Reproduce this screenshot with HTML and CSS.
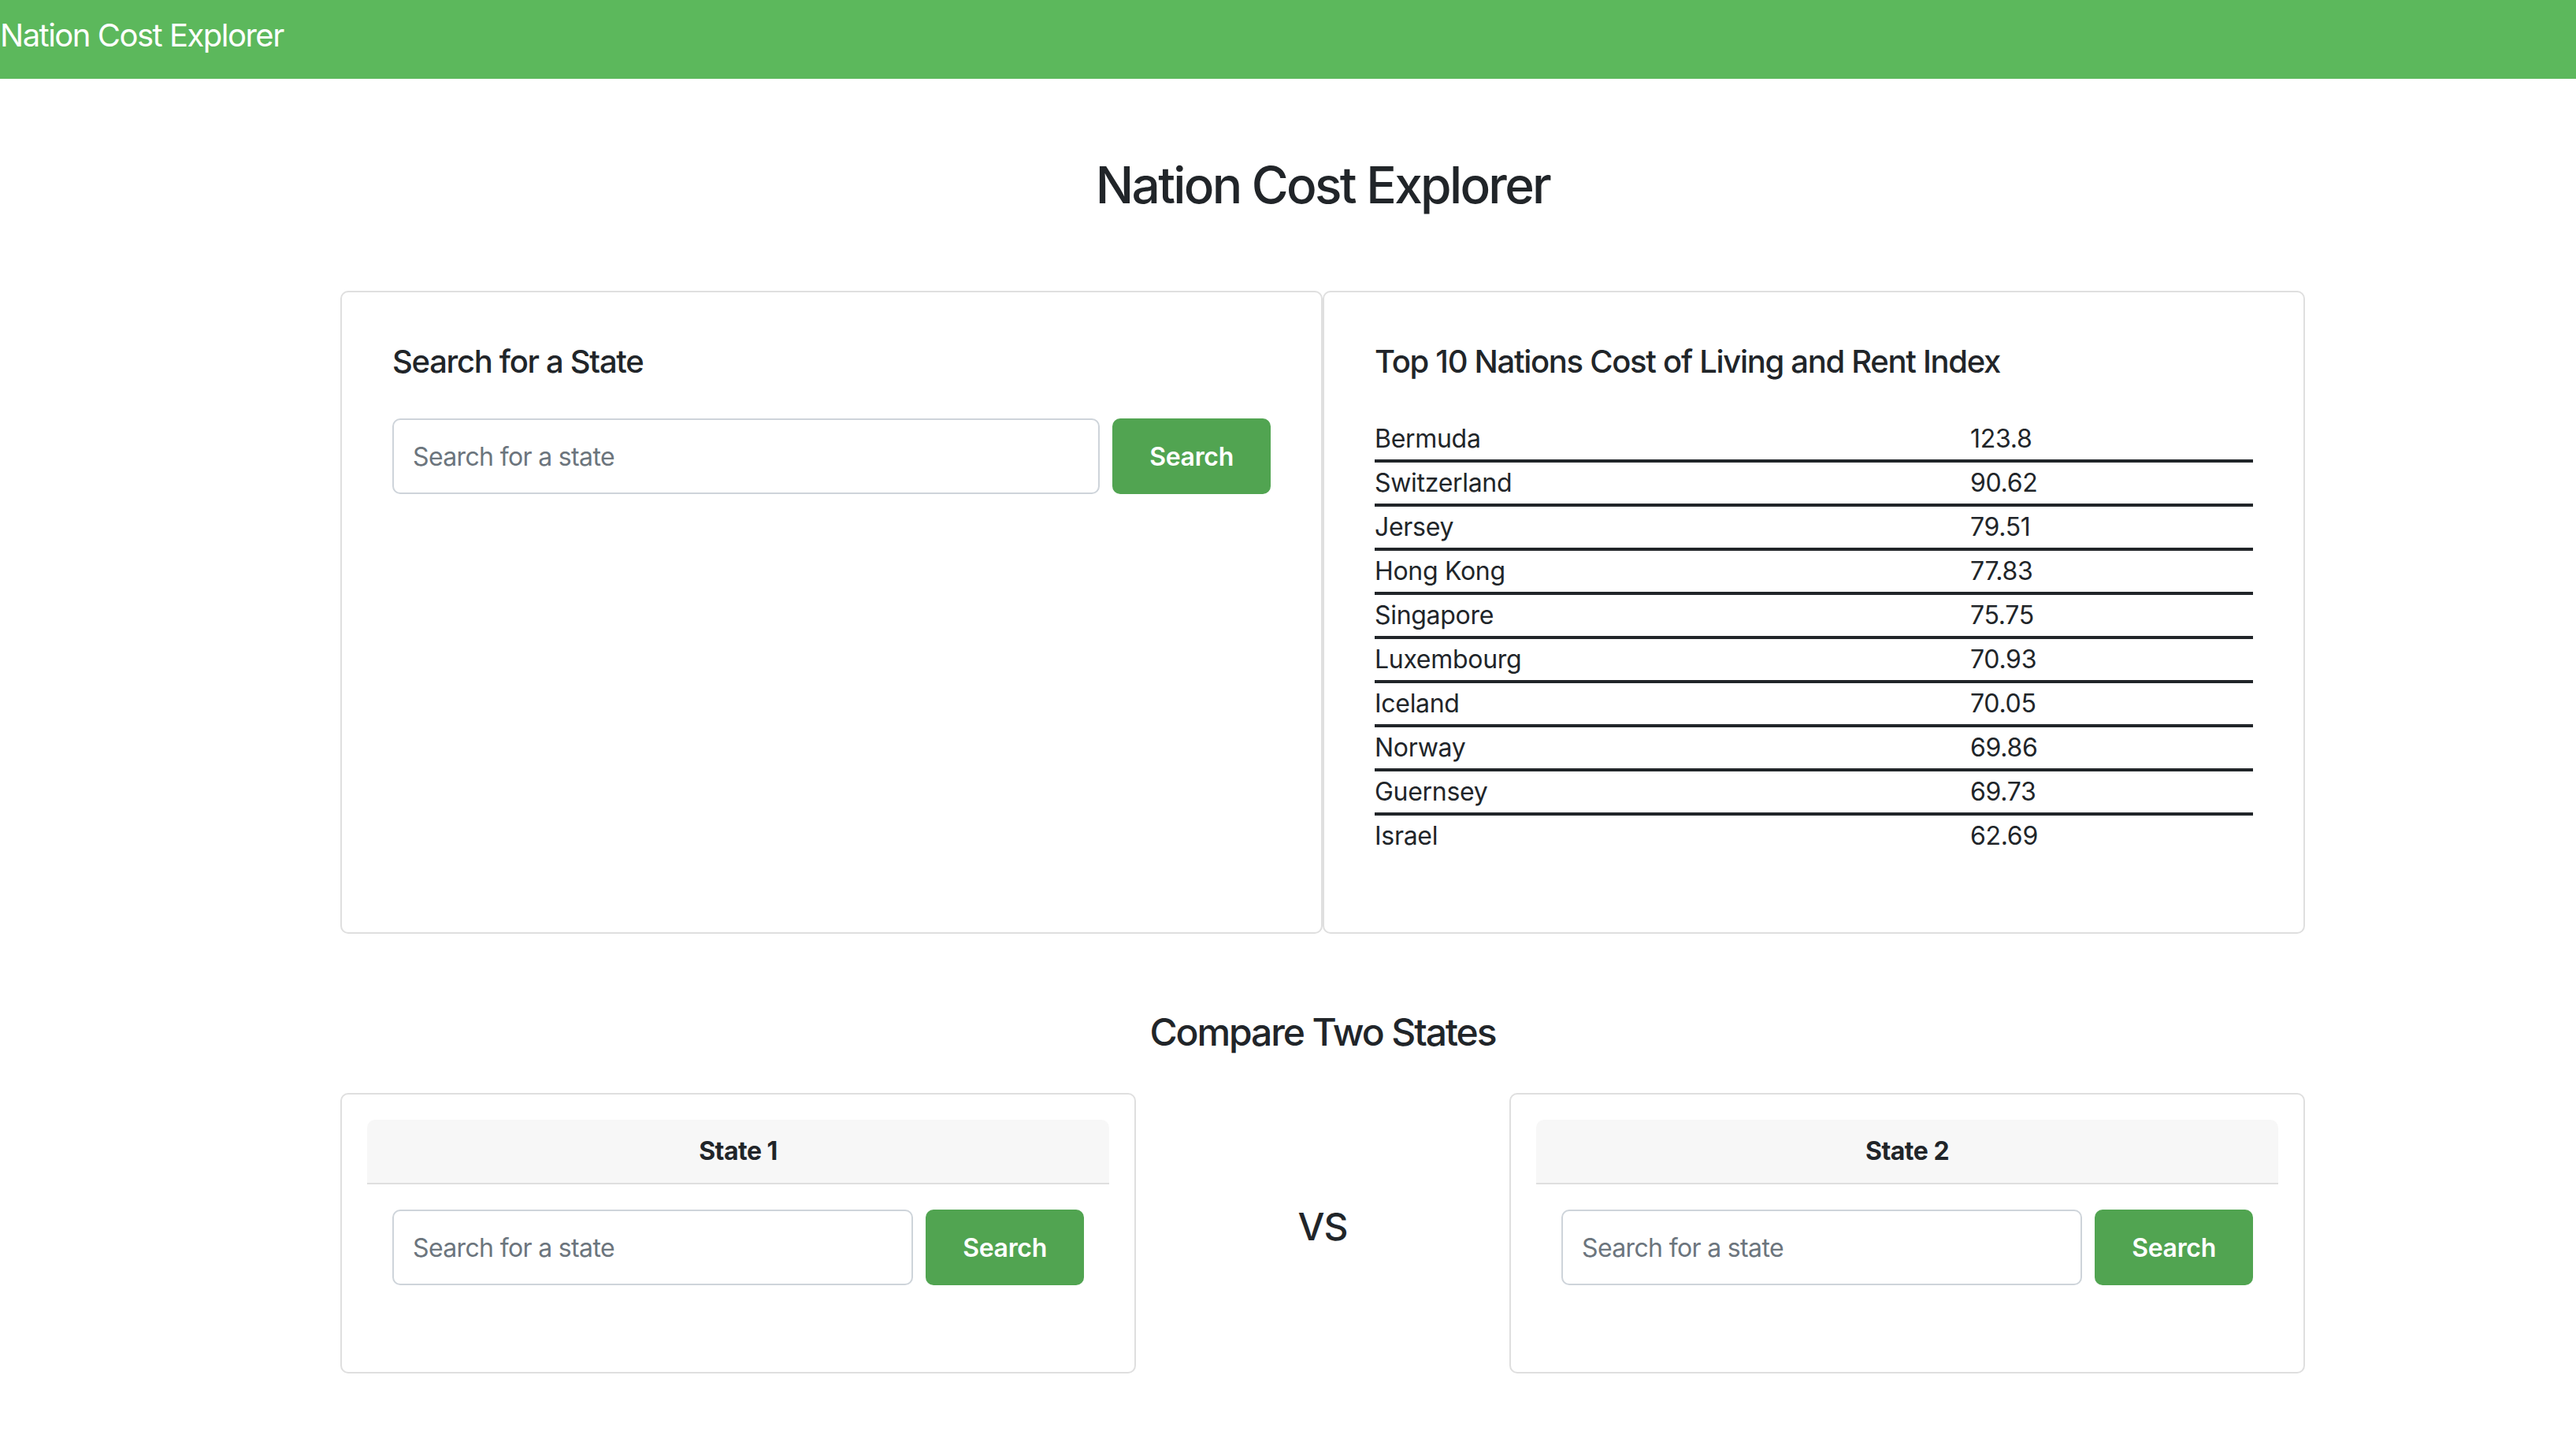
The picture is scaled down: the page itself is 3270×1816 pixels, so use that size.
FILE: index.html
```html
<!DOCTYPE html>
<html lang="en">
<head>
<meta charset="utf-8">
<title>Nation Cost Explorer</title>
<link rel="stylesheet" href="styles.css">
</head>
<body>
<nav class="navbar"><span class="brand">Nation Cost Explorer</span></nav>
<main class="page">
  <h1 class="page-title">Nation Cost Explorer</h1>
  <section class="top-row">
    <div class="card card-pad">
      <h2 class="card-title">Search for a State</h2>
      <form class="search">
        <input class="field" type="text" placeholder="Search for a state">
        <button class="btn" type="button">Search</button>
      </form>
    </div>
    <div class="card card-pad">
      <h2 class="card-title">Top 10 Nations Cost of Living and Rent Index</h2>
      <table class="ranking">
        <tbody>
          <tr><td class="name-col">Bermuda</td><td>123.8</td></tr>
          <tr><td class="name-col">Switzerland</td><td>90.62</td></tr>
          <tr><td class="name-col">Jersey</td><td>79.51</td></tr>
          <tr><td class="name-col">Hong Kong</td><td>77.83</td></tr>
          <tr><td class="name-col">Singapore</td><td>75.75</td></tr>
          <tr><td class="name-col">Luxembourg</td><td>70.93</td></tr>
          <tr><td class="name-col">Iceland</td><td>70.05</td></tr>
          <tr><td class="name-col">Norway</td><td>69.86</td></tr>
          <tr><td class="name-col">Guernsey</td><td>69.73</td></tr>
          <tr><td class="name-col">Israel</td><td>62.69</td></tr>
        </tbody>
      </table>
    </div>
  </section>
  <h3 class="section-title">Compare Two States</h3>
  <section class="compare-row">
    <div class="card card-tight">
      <div class="card-header">State 1</div>
      <div class="card-body">
        <form class="search search-gap">
          <input class="field" type="text" placeholder="Search for a state">
          <button class="btn" type="button">Search</button>
        </form>
      </div>
    </div>
    <div class="vs-col"><h4 class="vs">VS</h4></div>
    <div class="card card-tight">
      <div class="card-header">State 2</div>
      <div class="card-body">
        <form class="search search-gap">
          <input class="field" type="text" placeholder="Search for a state">
          <button class="btn" type="button">Search</button>
        </form>
      </div>
    </div>
  </section>
</main>
</body>
</html>
```
FILE: styles.css
```css
* { box-sizing: border-box; }

html, body {
  margin: 0;
  padding: 0;
  background: #ffffff;
}

body {
  font-family: Inter, "Liberation Sans", Arial, sans-serif;
  font-size: 32px;
  line-height: 48px;
  color: #212529;
}

.navbar {
  background: #5cb85c;
  height: 100px;
  padding-top: 15px;
}

.brand {
  display: block;
  color: #ffffff;
  font-size: 40px;
  line-height: 60px;
  letter-spacing: -1.5px;
}

.page {
  width: 2494px;
  margin-left: 432px;
  padding-bottom: 60px;
}

.page-title {
  margin: 96px 0 96px;
  text-align: center;
  font-size: 64px;
  line-height: 77px;
  font-weight: 500;
  letter-spacing: -2.7px;
}

.top-row {
  display: grid;
  grid-template-columns: 1fr 1fr;
}

.card {
  border: 2px solid #dfdfdf;
  border-radius: 10px;
  background: #fff;
}

.card-pad {
  padding: 64px;
}

.card-title {
  margin: 0 0 48px;
  font-size: 40px;
  line-height: 48px;
  font-weight: 500;
  letter-spacing: -1.3px;
}

.search {
  display: flex;
  gap: 16px;
}

.search-gap {
  margin-bottom: 46px;
}

.field {
  flex: 1;
  min-width: 0;
  height: 96px;
  padding: 22px 24px;
  border: 2px solid #ced4da;
  border-radius: 10px;
  font-family: inherit;
  font-size: 32px;
  line-height: 48px;
  color: #212529;
  background: #fff;
  letter-spacing: -0.65px;
}

.field::placeholder {
  color: #6c757d;
}

.btn {
  height: 96px;
  padding: 0 47px;
  border: none;
  border-radius: 10px;
  background: #51a451;
  color: #fff;
  font-family: inherit;
  font-size: 32px;
  font-weight: 600;
  letter-spacing: -0.3px;
}

.ranking {
  width: 100%;
  border-collapse: collapse;
  margin-bottom: 32px;
}

.ranking td {
  padding: 2px 0;
  line-height: 48px;
  letter-spacing: -0.3px;
}

.ranking tr {
  border-bottom: 4px solid #212529;
}

.ranking tr:last-child {
  border-bottom: none;
}

.name-col {
  width: 756px;
}

.section-title {
  margin: 96px 0 48px;
  text-align: center;
  font-size: 48px;
  line-height: 58px;
  font-weight: 500;
  letter-spacing: -2.1px;
}

.compare-row {
  display: grid;
  grid-template-columns: 1fr 474px 1fr;
  align-items: center;
}

.card-tight {
  padding: 32px;
}

.card-header {
  background: #f7f7f7;
  border-bottom: 2px solid #dfdfdf;
  border-radius: 10px 10px 0 0;
  padding: 16px 32px;
  text-align: center;
  font-weight: 700;
  line-height: 48px;
  letter-spacing: -0.5px;
}

.card-body {
  padding: 32px;
}

.vs-col {
  text-align: center;
}

.vs {
  margin: 0 0 16px;
  font-size: 48px;
  line-height: 58px;
  font-weight: 500;
  letter-spacing: -1px;
}
```
